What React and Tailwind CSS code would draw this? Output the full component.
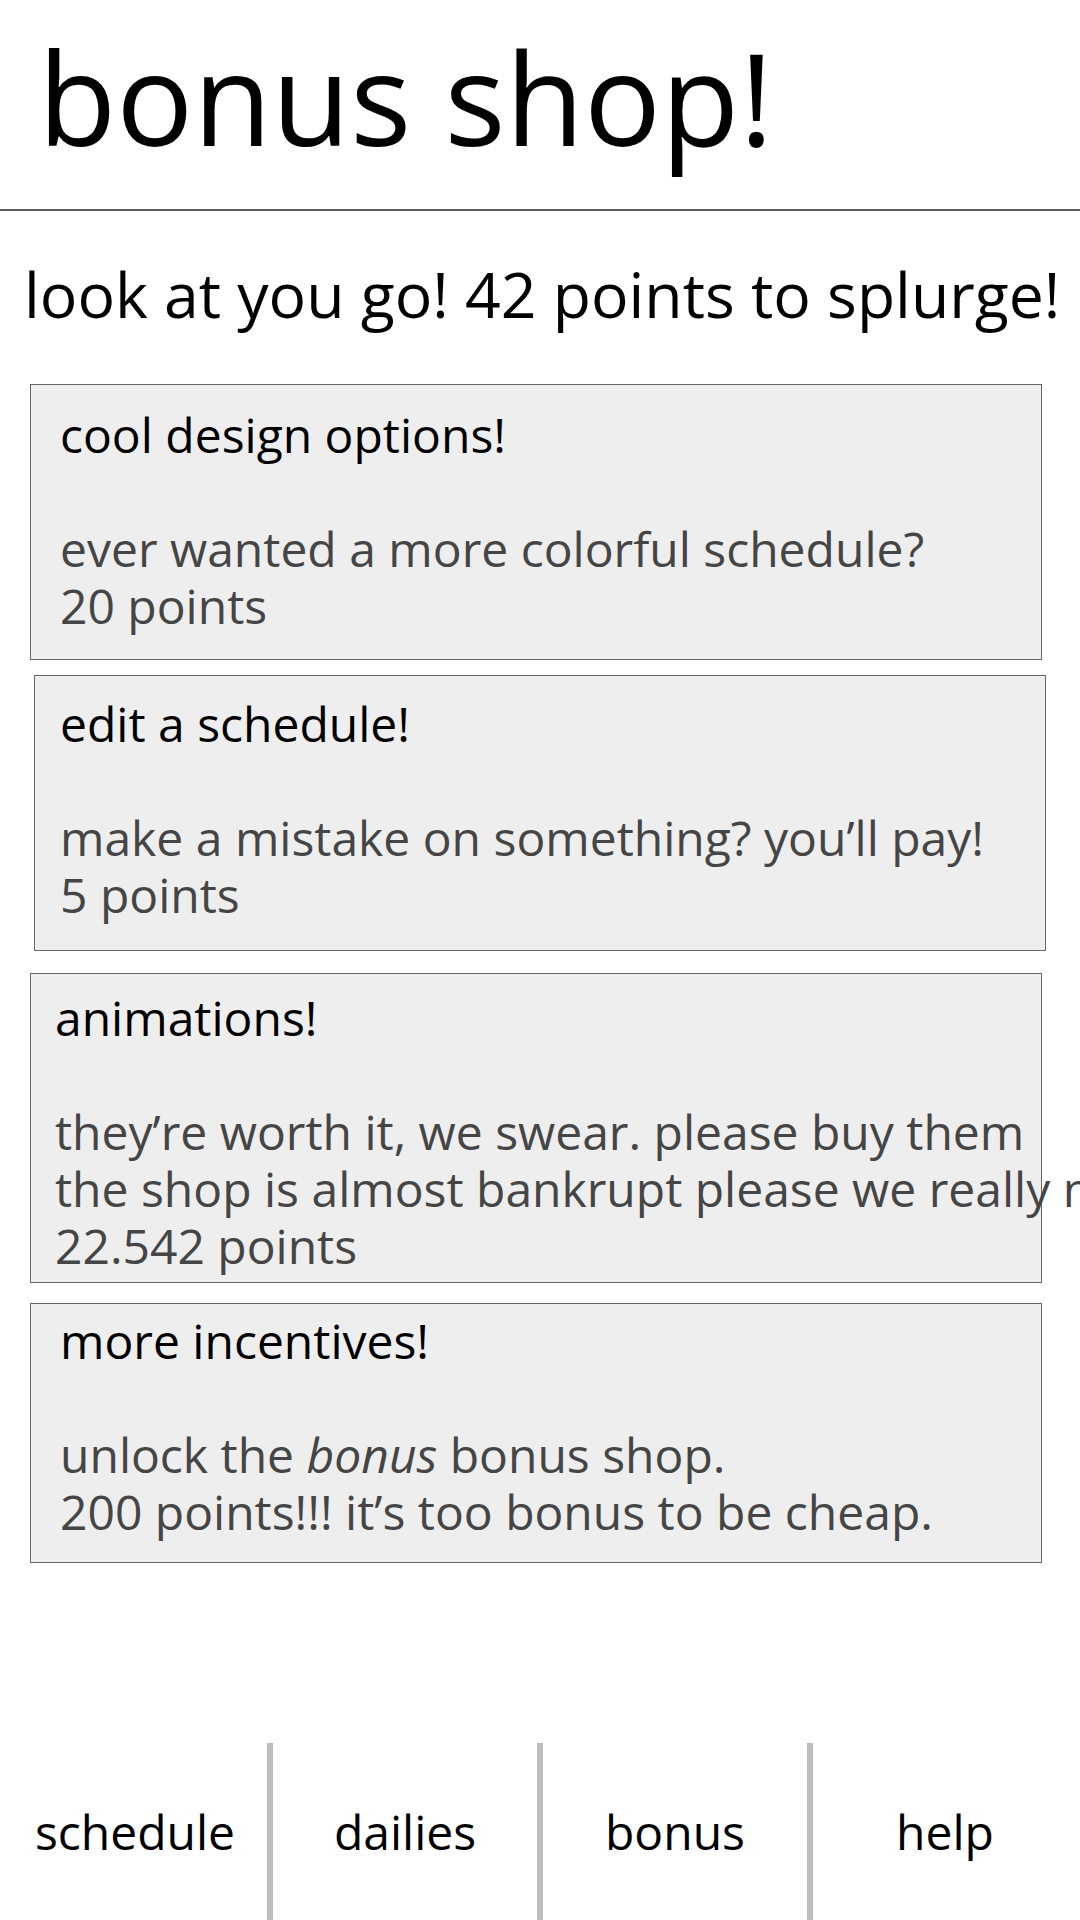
const ITEMS = [
  {
    title: 'cool design options!',
    lines: ['ever wanted a more colorful schedule?', '20 points'],
    box: 'ml-[30px] mt-[58px] h-[276px] pt-[21px] pl-[29px]',
  },
  {
    title: 'edit a schedule!',
    lines: ['make a mistake on something? you\u2019ll pay!', '5 points'],
    box: 'ml-[34px] mt-[15px] h-[276px] pt-[19px] pl-[25px]',
  },
  {
    title: 'animations!',
    lines: [
      'they\u2019re worth it, we swear. please buy them',
      'the shop is almost bankrupt please we really need this',
      '22.542 points',
    ],
    box: 'ml-[30px] mt-[22px] h-[310px] pt-[15px] pl-[24px]',
  },
  {
    title: 'more incentives!',
    lines: [
      <>unlock the <i>bonus</i> bonus shop.</>,
      '200 points!!! it\u2019s too bonus to be cheap.',
    ],
    box: 'ml-[30px] mt-[20px] h-[260px] pt-[8px] pl-[29px]',
  },
];

const NAV = ['schedule', 'dailies', 'bonus', 'help'];

function ShopCard({ title, lines, box }) {
  return (
    <div className={`w-[1012px] shrink-0 bg-[#eeeeee] border border-[#666666] text-[48px] leading-[57px] ${box}`}>
      <div className="text-black whitespace-nowrap">{title}</div>
      <div className="h-[57px]" />
      {lines.map((line, i) => (
        <div key={i} className="text-[#454545] whitespace-nowrap">
          {line}
        </div>
      ))}
    </div>
  );
}

export default function App() {
  return (
    <div
      className="w-[1080px] h-[1920px] bg-white flex flex-col overflow-hidden text-black"
      style={{ fontFamily: '"Open Sans", "Noto Sans", sans-serif' }}
    >
      {/* header */}
      <div className="h-[211px] shrink-0 border-b-2 border-[#595959] pl-[38px] pt-[33px]">
        <h1 className="text-[128px] leading-none whitespace-nowrap">bonus shop!</h1>
      </div>

      <div className="mt-[52px] pl-[24px] text-[62.5px] leading-none whitespace-nowrap">
        look at you go! 42 points to splurge!
      </div>

      {/* shop items */}
      {ITEMS.map((item) => (
        <ShopCard key={item.title} {...item} />
      ))}

      {/* bottom nav */}
      <nav className="mt-auto h-[177px] shrink-0 flex">
        {NAV.map((label, i) => (
          <div key={label} className="contents">
            {i > 0 && <div className="w-[6px] -mx-[3px] bg-[#bdbdbd] relative" />}
            <div className="flex-1 flex items-center justify-center text-[48px]">{label}</div>
          </div>
        ))}
      </nav>
    </div>
  );
}
